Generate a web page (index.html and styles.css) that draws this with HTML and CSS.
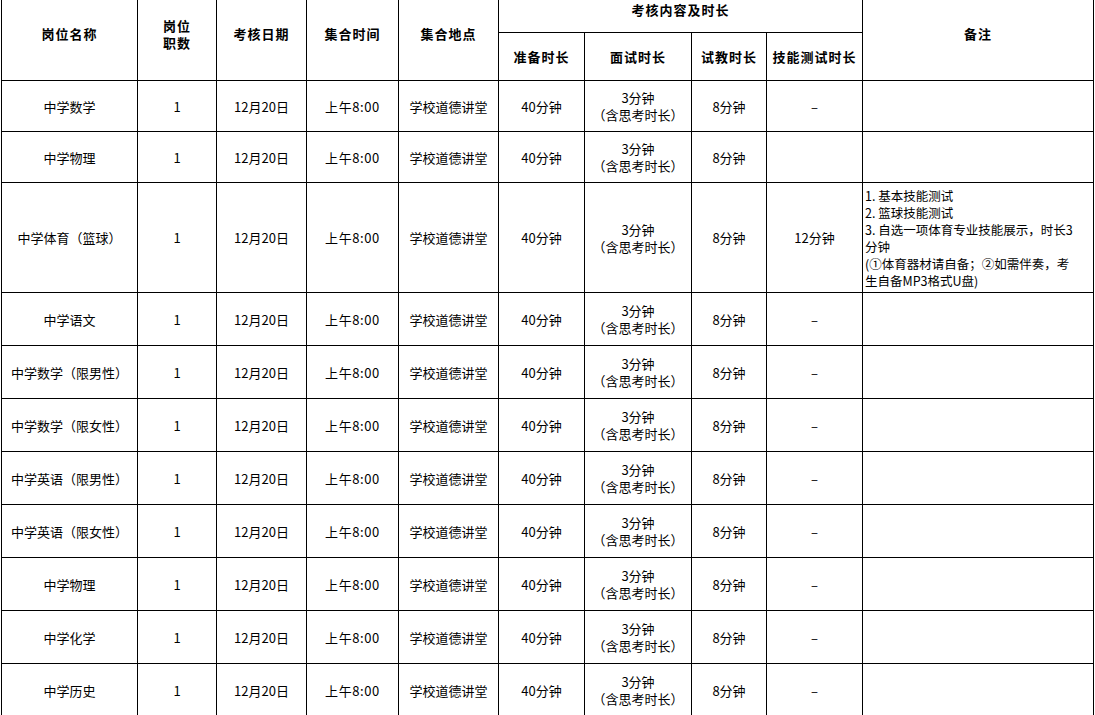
FILE: index.html
```html
<!DOCTYPE html>
<html lang="zh-CN">
<head>
<meta charset="utf-8">
<title>考核安排</title>
<link rel="stylesheet" href="styles.css">
</head>
<body>
<table class="sched">
  <colgroup>
    <col class="c1"><col class="c2"><col class="c3"><col class="c4"><col class="c5">
    <col class="c6"><col class="c7"><col class="c8"><col class="c9"><col class="c10">
  </colgroup>
  <thead>
    <tr class="h1">
      <th rowspan="2">岗位名称</th>
      <th rowspan="2">岗位<br>职数</th>
      <th rowspan="2">考核日期</th>
      <th rowspan="2">集合时间</th>
      <th rowspan="2">集合地点</th>
      <th colspan="4">考核内容及时长</th>
      <th rowspan="2">备注</th>
    </tr>
    <tr class="h2">
      <th>准备时长</th>
      <th>面试时长</th>
      <th>试教时长</th>
      <th>技能测试时长</th>
    </tr>
  </thead>
  <tbody>
    <tr class="r51">
      <td>中学数学</td><td>1</td><td>12月20日</td><td class="tm">上午8:00</td><td>学校道德讲堂</td>
      <td>40分钟</td><td>3分钟<br>（含思考时长）</td><td>8分钟</td><td>–</td><td class="note"></td>
    </tr>
    <tr class="r52">
      <td>中学物理</td><td>1</td><td>12月20日</td><td class="tm">上午8:00</td><td>学校道德讲堂</td>
      <td>40分钟</td><td>3分钟<br>（含思考时长）</td><td>8分钟</td><td></td><td class="note"></td>
    </tr>
    <tr class="r110">
      <td>中学体育（篮球）</td><td>1</td><td>12月20日</td><td class="tm">上午8:00</td><td>学校道德讲堂</td>
      <td>40分钟</td><td>3分钟<br>（含思考时长）</td><td>8分钟</td><td>12分钟</td>
      <td class="note">1. 基本技能测试<br>2. 篮球技能测试<br>3. 自选一项体育专业技能展示，时长3<br>分钟<br>(①体育器材请自备；②如需伴奏，考<br>生自备MP3格式U盘)</td>
    </tr>
    <tr class="r53">
      <td>中学语文</td><td>1</td><td>12月20日</td><td class="tm">上午8:00</td><td>学校道德讲堂</td>
      <td>40分钟</td><td>3分钟<br>（含思考时长）</td><td>8分钟</td><td>–</td><td class="note"></td>
    </tr>
    <tr class="r53">
      <td>中学数学（限男性）</td><td>1</td><td>12月20日</td><td class="tm">上午8:00</td><td>学校道德讲堂</td>
      <td>40分钟</td><td>3分钟<br>（含思考时长）</td><td>8分钟</td><td>–</td><td class="note"></td>
    </tr>
    <tr class="r53">
      <td>中学数学（限女性）</td><td>1</td><td>12月20日</td><td class="tm">上午8:00</td><td>学校道德讲堂</td>
      <td>40分钟</td><td>3分钟<br>（含思考时长）</td><td>8分钟</td><td>–</td><td class="note"></td>
    </tr>
    <tr class="r53">
      <td>中学英语（限男性）</td><td>1</td><td>12月20日</td><td class="tm">上午8:00</td><td>学校道德讲堂</td>
      <td>40分钟</td><td>3分钟<br>（含思考时长）</td><td>8分钟</td><td>–</td><td class="note"></td>
    </tr>
    <tr class="r53">
      <td>中学英语（限女性）</td><td>1</td><td>12月20日</td><td class="tm">上午8:00</td><td>学校道德讲堂</td>
      <td>40分钟</td><td>3分钟<br>（含思考时长）</td><td>8分钟</td><td>–</td><td class="note"></td>
    </tr>
    <tr class="r53">
      <td>中学物理</td><td>1</td><td>12月20日</td><td class="tm">上午8:00</td><td>学校道德讲堂</td>
      <td>40分钟</td><td>3分钟<br>（含思考时长）</td><td>8分钟</td><td>–</td><td class="note"></td>
    </tr>
    <tr class="r53">
      <td>中学化学</td><td>1</td><td>12月20日</td><td class="tm">上午8:00</td><td>学校道德讲堂</td>
      <td>40分钟</td><td>3分钟<br>（含思考时长）</td><td>8分钟</td><td>–</td><td class="note"></td>
    </tr>
    <tr class="r53">
      <td>中学历史</td><td>1</td><td>12月20日</td><td class="tm">上午8:00</td><td>学校道德讲堂</td>
      <td>40分钟</td><td>3分钟<br>（含思考时长）</td><td>8分钟</td><td>–</td><td class="note"></td>
    </tr>
  </tbody>
</table>
</body>
</html>
```
FILE: styles.css
```css
html, body {
  margin: 0;
  padding: 0;
  background: #ffffff;
  overflow: hidden;
}
body {
  font-family: "Noto Sans CJK SC", "Noto Sans", sans-serif;
  font-size: 13px;
  color: #000000;
}
.sched {
  border-collapse: collapse;
  table-layout: fixed;
  width: 1092px;
  margin: -14px 0 0 1px;
}
.c1 { width: 136px; }
.c2 { width: 79px; }
.c3 { width: 90px; }
.c4 { width: 92px; }
.c5 { width: 100px; }
.c6 { width: 86px; }
.c7 { width: 107px; }
.c8 { width: 75px; }
.c9 { width: 96px; }
.c10 { width: 231px; }
.sched th,
.sched td {
  border: 1px solid #000000;
  padding: 0 2px;
  text-align: center;
  vertical-align: middle;
  line-height: 17px;
  font-weight: normal;
  overflow: hidden;
}
.sched th {
  font-weight: bold;
  letter-spacing: 1px;
}
.sched td.tm {
  letter-spacing: 0.6px;
}
.h1 { height: 46px; }
.h2 { height: 48px; }
.r51 { height: 51px; }
.r52 { height: 51px; }
.r110 { height: 110px; }
.r53 { height: 53px; }
.sched td.note {
  text-align: left;
  padding: 0 2px;
  font-size: 12.5px;
}
```
